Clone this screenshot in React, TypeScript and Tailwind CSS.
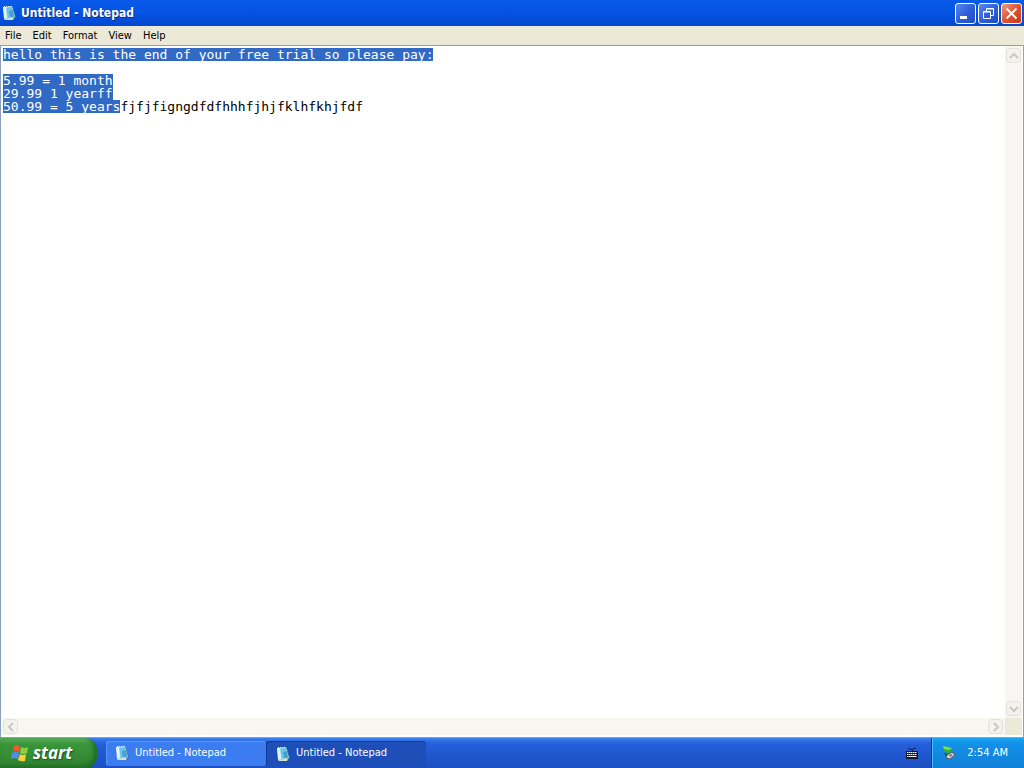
import React, { useEffect, useRef } from "react";

const noteText = [
  "hello this is the end of your free trial so please pay:",
  "",
  "5.99 = 1 month",
  "29.99 1 yearff",
  "50.99 = 5 yearsfjfjfigngdfdfhhhfjhjfklhfkhjfdf",
].join("\n");

const selectionEnd = noteText.indexOf("years") + "years".length;
const selectedLines = noteText.slice(0, selectionEnd).split("\n");

const menuItems = ["File", "Edit", "Format", "View", "Help"];

const tasks = [
  { id: 1, title: "Untitled - Notepad", active: false },
  { id: 2, title: "Untitled - Notepad", active: true },
];

const NotepadIcon: React.FC<{ className?: string }> = ({ className }) => (
  <svg viewBox="0 0 16 16" className={className} aria-hidden="true">
    <path d="M3 2 L11 2 L14 12 L11 15 L3 15 Z" fill="#2f7ba8" />
    <path d="M1 2 L10 1 L13 12 L3 14 Z" fill="#9bdcf2" />
    <path d="M4 3 L10 2 L12 12 L6 13 Z" fill="#6cc3e6" />
    <path d="M7 6 L11 5 L12 12 L8 12 Z" fill="#4a9fd0" />
    <path d="M1 2 L4 2 L5 13 L2 14 Z" fill="#dff7fc" />
    <path d="M2 14 L12 12 L11 15 L3 15 Z" fill="#d3e2cc" />
    <path d="M2 1.500h8" stroke="#d9f5fb" strokeDasharray="1 1" />
  </svg>
);

const WindowsFlag: React.FC = () => (
  <svg viewBox="0 0 18 18" className="h-[18px] w-[18px]" aria-hidden="true">
    <path d="M3 2 Q6 0 9 2 L8 8 Q5 6 2 8 Z" fill="#f0592b" />
    <path d="M10 3 Q13 5 17 3 L16 9 Q12 11 9 9 Z" fill="#8cd13e" />
    <path d="M1 9 Q5 7 8 9 L7 15 Q4 13 0 15 Z" fill="#4f8df5" />
    <path d="M9 10 Q12 12 15 10 L14 17 Q10 18 7 16 Z" fill="#fbd038" />
  </svg>
);

const KeyboardIcon: React.FC = () => (
  <svg viewBox="0 0 14 12" className="h-3 w-[14px]" aria-hidden="true">
    <path d="M3 1.500h2M5 2.500h3M8 1.500h3M7.500 3v1" fill="none" stroke="#0a1c50" />
    <path d="M1 4h12v8H1z" fill="#10182c" />
    <path d="M2 5.500h10M2 7.500h10M2 9.500h10" stroke="#fff" strokeDasharray="1.500 .5" />
    <path d="M4 9.500h6" stroke="#fff" />
  </svg>
);

const TrayIcon: React.FC = () => (
  <svg viewBox="0 0 16 16" className="h-4 w-4" aria-hidden="true">
    <path d="M2 1 L11 3 L10 7 L6 8 L3 6 Z" fill="#2fb52c" />
    <path d="M2 1 L11 3 L8 5 L3 4 Z" fill="#7be05c" />
    <path d="M3 8 L7 9 L8 12 L6 13 Z" fill="#1c4a2a" />
    <path d="M6 10 L11 7 L14 10 L9 14 L5 13 Z" fill="#d5d8d5" stroke="#4d5a60" />
    <path d="M8 10 L10 9 L12 10 L9 12 Z" fill="#6d7a80" />
  </svg>
);

const Chevron: React.FC<{ d: string }> = ({ d }) => (
  <svg viewBox="0 0 10 10" className="h-[10px] w-[10px]" aria-hidden="true">
    <path d={d} fill="none" stroke="#c9c8ba" strokeWidth="2" />
  </svg>
);

const ScrollButton: React.FC<{ label: string; d: string }> = ({ label, d }) => (
  <button
    type="button"
    aria-label={label}
    className="flex h-[15px] w-[15px] shrink-0 items-center justify-center rounded-sm border border-[#e2e1d8] bg-[#f3f2ec]"
  >
    <Chevron d={d} />
  </button>
);

const TitleBar: React.FC = () => (
  <header className="flex h-[26px] items-center bg-linear-to-b from-[#0a5bea] via-[#0453e3] to-[#0548cf] px-[2px]">
    <NotepadIcon className="h-4 w-4" />
    <h1 className="ml-[3px] flex-1 font-['DejaVu_Sans_Condensed','DejaVu_Sans',sans-serif] text-[12px] font-bold text-white [text-shadow:1px_1px_#0a2f8a]">
      Untitled - Notepad
    </h1>
    <div className="flex gap-[2px]">
      <button
        type="button"
        aria-label="Minimize"
        className="h-[21px] w-[21px] rounded-[3px] border border-white bg-linear-to-br from-[#5c86ee] via-[#2f60dc] to-[#1c4cc4]"
      >
        <svg viewBox="0 0 19 19" aria-hidden="true">
          <path d="M4 13.500h7" stroke="#fff" strokeWidth="3" />
        </svg>
      </button>
      <button
        type="button"
        aria-label="Restore"
        className="h-[21px] w-[21px] rounded-[3px] border border-white bg-linear-to-br from-[#5c86ee] via-[#2f60dc] to-[#1c4cc4]"
      >
        <svg viewBox="0 0 19 19" fill="none" stroke="#fff" aria-hidden="true">
          <path d="M7.500 7V4.500H14.500V11.500H12M7 5h8" />
          <path d="M4.500 7.500H11.500V14.500H4.500ZM4 8h8" />
        </svg>
      </button>
      <button
        type="button"
        aria-label="Close"
        className="h-[21px] w-[21px] rounded-[3px] border border-white bg-linear-to-br from-[#f09a80] via-[#e0532c] to-[#c43a14]"
      >
        <svg viewBox="0 0 19 19" aria-hidden="true">
          <path d="M4.500 4.500L14.500 14.500M14.500 4.500L4.500 14.500" stroke="#fff" strokeWidth="2" />
        </svg>
      </button>
    </div>
  </header>
);

const MenuBar: React.FC = () => (
  <nav className="flex h-[19px] items-center gap-px bg-[#ece9d8]">
    {menuItems.map((item) => (
      <button key={item} type="button" className="px-[5px] text-[11px] leading-4 text-black">
        {item}
      </button>
    ))}
  </nav>
);

const Editor: React.FC = () => {
  const ref = useRef<HTMLTextAreaElement>(null);

  useEffect(() => {
    ref.current?.focus();
    ref.current?.setSelectionRange(0, selectionEnd);
  }, []);

  return (
    <main className="flex min-h-0 flex-1 flex-col border border-[#8a9fb8] bg-white pr-px pb-[2px]">
      <div className="flex min-h-0 flex-1">
        <div className="grid min-w-0 flex-1 px-[2px] pt-[2px] font-['DejaVu_Sans_Mono',monospace] text-[13px] leading-[13px]">
          {/* selection bars, one per line, so empty lines stay blank */}
          <div className="col-start-1 row-start-1" aria-hidden="true">
            {selectedLines.map((line, idx) => (
              <div key={idx} className="h-[13px] bg-[#316ac5]" style={{ width: `${line.length}ch` }} />
            ))}
          </div>
          <textarea
            ref={ref}
            aria-label="Document text"
            defaultValue={noteText}
            wrap="off"
            spellCheck={false}
            className="z-10 col-start-1 row-start-1 resize-none overflow-hidden bg-transparent text-black outline-none selection:bg-transparent selection:text-white"
          />
        </div>
        <div className="flex w-[17px] flex-col items-center justify-between bg-[#f7f6f1] py-[2px]">
          <ScrollButton label="Scroll up" d="M1 7L5 3L9 7" />
          <ScrollButton label="Scroll down" d="M1 3L5 7L9 3" />
        </div>
      </div>
      <div className="flex h-[17px]">
        <div className="flex flex-1 items-center justify-between bg-[#f7f6f1] px-[2px]">
          <ScrollButton label="Scroll left" d="M7 1L3 5L7 9" />
          <ScrollButton label="Scroll right" d="M3 1L7 5L3 9" />
        </div>
        <div className="w-[17px] bg-[#ece9d8]" />
      </div>
    </main>
  );
};

const Taskbar: React.FC = () => (
  <footer className="flex h-[30px] items-stretch bg-linear-to-b from-[#3a80ee] via-[#245edb] via-20% to-[#1d4fc0] text-white">
    <button
      type="button"
      className="flex w-[97px] items-center gap-1 rounded-r-xl bg-linear-to-b from-[#5cae5c] via-[#3a963a] via-20% to-[#2f822f] pl-[11px] shadow-[inset_-3px_-2px_4px_#1f6a24]"
    >
      <WindowsFlag />
      <span className="font-['Open_Sans',sans-serif] text-[17px] leading-5 font-bold italic [text-shadow:1px_1px_2px_#1b4a1b]">
        start
      </span>
    </button>
    <div className="flex flex-1 items-center pl-[9px]">
      {tasks.map((task) => (
        <button
          key={task.id}
          type="button"
          className={
            task.active
              ? "flex h-[25px] w-40 items-center gap-1 rounded-[3px] bg-[#1e4fb8] pt-px pl-[10px] text-[11px] shadow-[inset_1px_1px_1px_#123a8e]"
              : "flex h-[25px] w-40 items-center gap-1 rounded-[3px] bg-[#3b7df0] pl-[9px] text-[11px] shadow-[inset_1px_1px_1px_#5b97f7]"
          }
        >
          <NotepadIcon className="h-4 w-4" />
          {task.title}
        </button>
      ))}
    </div>
    <button type="button" aria-label="Keyboard layout" className="mr-3">
      <KeyboardIcon />
    </button>
    <div className="flex w-[93px] items-center justify-between border-l border-[#0a3a9a] bg-linear-to-b from-[#1ba6f2] via-[#1290e8] via-20% to-[#1180d8] pr-4 pl-[9px] shadow-[inset_1px_0_#3cc0fb]">
      <TrayIcon />
      <time className="text-[11px]">2:54 AM</time>
    </div>
  </footer>
);

const App: React.FC = () => (
  <div className="flex h-screen flex-col overflow-hidden bg-[#ece9d8] font-['DejaVu_Sans_Condensed','DejaVu_Sans',sans-serif]">
    <TitleBar />
    <MenuBar />
    <Editor />
    <Taskbar />
  </div>
);

export default App;
